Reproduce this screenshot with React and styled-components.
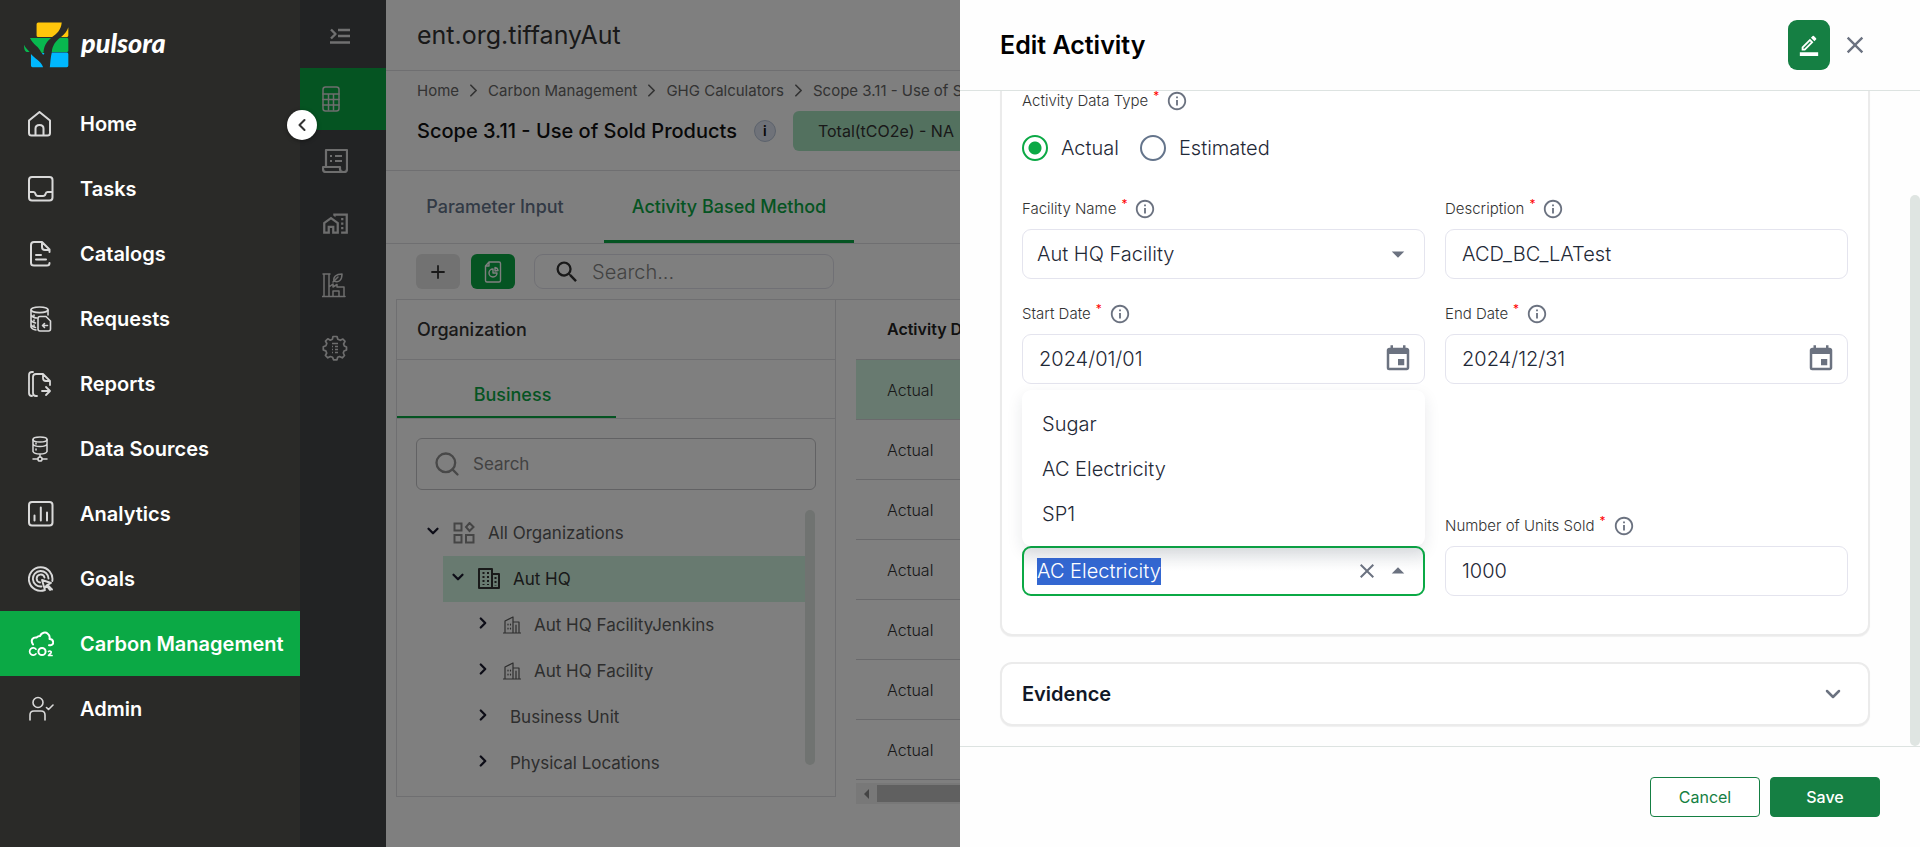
import React, { useEffect, useRef, useState } from "react";
import styled, { createGlobalStyle, css } from "styled-components";
import {
  MdArrowDropDown,
  MdArrowDropUp,
  MdClose,
  MdEvent,
  MdInfoOutline,
  MdOutlineHomeWork,
  MdSearch,
  MdOutlineBorderColor,
} from "react-icons/md";
import { ChevronDown, ChevronLeft, ChevronRight, Search } from "lucide-react";

const GlobalStyle = createGlobalStyle`
  *, *::before, *::after { box-sizing: border-box; }
  body {
    margin: 0;
    background: #fff;
    color: #111827;
    font-family: Inter, "Liberation Sans", sans-serif;
    overflow: hidden;
  }
  button, input, select { font: inherit; color: inherit; }
  button { cursor: pointer; }
  ul { list-style: none; margin: 0; padding: 0; }
  h1, h2, h3 { margin: 0; }
  svg { display: block; flex: none; }
`;

/* ---------- shell ---------- */

const Shell = styled.div`
  display: grid;
  grid-template-columns: 300px 86px minmax(0, 1fr);
  height: 100vh;
  overflow: hidden;
`;

const Sidebar = styled.aside`
  display: flex;
  flex-direction: column;
  background: #2a2a28;
  color: #fff;
`;

const Brand = styled.a`
  display: flex;
  align-items: center;
  gap: 12px;
  height: 91px;
  padding: 0 0 2px 24px;
  color: #fff;
  text-decoration: none;
  font: italic 900 27px/32px Lato, sans-serif;

  span { padding-bottom: 4px; }
`;

const NavLink = styled.a`
  display: flex;
  align-items: center;
  gap: 26px;
  height: 65px;
  padding-left: 28px;
  background: ${(p) => (p.$active ? "#0ba945" : "transparent")};
  color: #fff;
  font-size: 20px;
  font-weight: 600;
  text-decoration: none;
  white-space: nowrap;

  svg {
    width: 26px;
    height: 26px;
    color: ${(p) => (p.$active ? "#fff" : "#d9d9d9")};
  }
`;

const Rail = styled.nav`
  position: relative;
  background: #444649;
  color: #fff;
`;

const RailTop = styled.button`
  display: flex;
  align-items: center;
  width: 100%;
  height: 68px;
  padding: 4px 0 0 30px;
  border: 0;
  background: none;
  color: #e0e0e0;
`;

const RailList = styled.ul`
  display: flex;
  flex-direction: column;
  height: 311px;

  li { flex: 1; display: flex; }
`;

const RailLink = styled.a`
  flex: 1;
  display: flex;
  align-items: center;
  padding-left: 22px;
  color: #dcdcdc;
  background: ${(p) => (p.$active ? "#0ba945" : "transparent")};
`;

const Collapse = styled.button`
  position: fixed;
  z-index: 3;
  top: 110px;
  left: 287px;
  display: grid;
  place-items: center;
  width: 30px;
  height: 30px;
  padding: 0;
  border: 0;
  border-radius: 50%;
  background: #fff;
  color: #333;
  box-shadow: 0 1px 4px rgba(0, 0, 0, 0.4);
`;

const Backdrop = styled.div`
  position: fixed;
  z-index: 2;
  inset: 0 0 0 300px;
  background: rgba(0, 0, 0, 0.5);
`;

/* ---------- main page ---------- */

const Main = styled.main`
  min-width: 0;
  background: #fff;
`;

const OrgHeader = styled.header`
  display: flex;
  align-items: center;
  height: 71px;
  padding-left: 31px;
  border-bottom: 1px solid #dedee2;
  color: #333;
  font-size: 25px;
  line-height: 30px;
`;

const PageHead = styled.section`
  height: 100px;
  padding: 9px 0 0 31px;
  border-bottom: 1px solid #dedee2;
`;

const Crumbs = styled.nav`
  display: flex;
  align-items: center;
  gap: 4px;
  color: #666;
  font-size: 15px;
  line-height: 20px;
  white-space: nowrap;

  a { color: inherit; text-decoration: none; }
`;

const TitleRow = styled.div`
  display: flex;
  align-items: center;
  gap: 17px;
  margin-top: 10px;
`;

const PageTitle = styled.h1`
  font-size: 20px;
  font-weight: 500;
  line-height: 24px;
  color: #111;
  white-space: nowrap;
`;

const InfoDot = styled.button`
  width: 22px;
  height: 22px;
  padding: 0;
  border: 1px solid #b8c4d8;
  border-radius: 50%;
  background: #dfe5f2;
  color: #111;
  font-size: 14px;
  font-weight: 600;
  line-height: 20px;
`;

const TotalPill = styled.div`
  display: flex;
  align-items: center;
  height: 40px;
  padding: 0 25px;
  border-radius: 6px;
  background: #a7e2bf;
  color: #333;
  font-size: 16px;
  white-space: nowrap;
`;

const Tabs = styled.div`
  display: flex;
  height: 73px;
  border-bottom: 1px solid #dedee2;
`;

const Tab = styled.button`
  width: ${(p) => p.$width};
  padding: ${(p) => p.$pad || "2px 0 0"};
  border: 0;
  border-bottom: ${(p) => p.$bar || "3px"} solid ${(p) => (p.$active ? "#0ba945" : "transparent")};
  background: none;
  color: ${(p) => (p.$active ? "#0ba945" : "#64748b")};
  font-size: 18px;
  font-weight: 500;
  white-space: nowrap;
`;

const Toolbar = styled.div`
  display: flex;
  align-items: center;
  height: 55px;
  padding-left: 30px;
`;

const ToolButton = styled.button`
  display: grid;
  place-items: center;
  width: 44px;
  height: 35px;
  margin-right: 11px;
  padding: 0;
  border: 0;
  border-radius: 6px;
  background: ${(p) => (p.$primary ? "#0ba945" : "#e4e4e4")};
  color: ${(p) => (p.$primary ? "#fff" : "#333")};
`;

const SearchBox = styled.label`
  display: flex;
  align-items: center;
  gap: ${(p) => (p.$large ? "12px" : "11px")};
  width: ${(p) => (p.$large ? "auto" : "300px")};
  height: ${(p) => (p.$large ? "52px" : "35px")};
  margin: ${(p) => (p.$large ? "19px 19px 0" : "0 0 0 8px")};
  padding: 0 ${(p) => (p.$large ? "16px" : "18px")};
  border: 1px solid ${(p) => (p.$large ? "#c4c4c8" : "#e0e0ea")};
  border-radius: ${(p) => (p.$large ? "6px" : "9px")};
  color: ${(p) => (p.$large ? "#909090" : "#333")};

  input {
    flex: 1;
    min-width: 0;
    padding: 0;
    border: 0;
    outline: 0;
    background: none;
    font-size: ${(p) => (p.$large ? "17px" : "20px")};
    font-weight: ${(p) => (p.$large ? 400 : 300)};
  }
  input::placeholder { color: #858585; opacity: 1; }
`;

const Split = styled.div`
  display: flex;
  gap: 20px;
  margin-left: 10px;
  border-top: 1px solid #dedee2;
`;

const OrgPanel = styled.section`
  width: 440px;
  height: 497px;
  border: 1px solid #dedee2;
  border-top: 0;
`;

const PanelHead = styled.h2`
  height: 60px;
  padding-left: 20px;
  border-bottom: 1px solid #dedee2;
  color: #333;
  font-size: 18px;
  font-weight: 500;
  line-height: 60px;
`;

const PanelTabs = styled.div`
  display: flex;
  height: 59px;
  border-bottom: 1px solid #dedee2;
`;

const TreeScroll = styled.div`
  display: flex;
  margin: 20px 20px 0 27px;
  height: 277px;
`;

const Tree = styled.ul`
  flex: 1;
  min-width: 0;
`;

const TreeRow = styled.li`
  display: flex;
  align-items: center;
  gap: ${(p) => p.$gap || "13px"};
  height: 46px;
  margin-left: ${(p) => p.$indent || "0"};
  padding-left: ${(p) => p.$pad || "0"};
  background: ${(p) => (p.$selected ? "#d0f5e0" : "transparent")};
  color: ${(p) => (p.$selected ? "#333" : "#5c5c5c")};
  font-size: 17px;
  line-height: 24px;
  white-space: nowrap;

  button {
    display: grid;
    place-items: center;
    width: 16px;
    height: 24px;
    padding: 0 0 4px;
    border: 0;
    background: none;
    color: #1a1a2e;
  }
`;

const ScrollThumb = styled.div`
  width: 10px;
  height: ${(p) => p.$height};
  border-radius: 5px;
  background: #e0e6e2;
`;

const TableWrap = styled.div`
  flex: 1;
  min-width: 0;
`;

const DataTable = styled.table`
  width: 100%;
  border-collapse: separate;
  border-spacing: 0;

  th, td {
    height: 60px;
    padding: 0 0 0 31px;
    border-bottom: 1px solid #d4d4d8;
    text-align: left;
    font-size: 16px;
    font-weight: 300;
    color: #333;
  }
  th {
    padding-bottom: 1px;
    font-weight: 600;
    color: #222;
  }
`;

const DataRow = styled.tr`
  background: ${(p) => (p.$selected ? "#d0f5e0" : "transparent")};
`;

const HScroll = styled.div`
  display: flex;
  align-items: center;
  gap: 8px;
  height: 21px;
  margin-top: 3px;
  padding-left: 8px;
  background: #f1f1f1;
  color: #888;

  div { flex: 1; height: 17px; background: #c1c1c1; }
`;

/* ---------- drawer ---------- */

const Drawer = styled.section`
  position: fixed;
  z-index: 4;
  inset: 0 0 0 50%;
  display: flex;
  flex-direction: column;
  background: #fefefe;
`;

const DrawerHead = styled.header`
  display: flex;
  align-items: center;
  height: 91px;
  padding: 0 51px 0 40px;
  border-bottom: 1px solid #dde3e1;

  h2 {
    flex: 1;
    font-size: 25px;
    font-weight: 600;
    line-height: 30px;
    color: #000;
  }
`;

const EditButton = styled.button`
  display: grid;
  place-items: center;
  width: 42px;
  height: 50px;
  margin-right: 11px;
  padding: 0;
  border: 0;
  border-radius: 9px;
  background: #157f43;
  color: #fff;
`;

const IconButton = styled.button`
  display: grid;
  place-items: center;
  padding: 0;
  border: 0;
  background: none;
  color: #6b7280;
`;

const DrawerBody = styled.div`
  flex: 1;
  min-height: 0;
  display: flex;
  justify-content: space-between;
  padding-left: 40px;
  overflow: hidden;
`;

const Sections = styled.form`
  flex: 1;
  margin-right: 40px;
`;

const cardFrame = css`
  border: 2px solid #ebebeb;
  background: #fff;
  box-shadow: 0 1px 1px rgba(0, 0, 0, 0.06);
`;

const Card = styled.div`
  ${cardFrame}
  padding: 0 20px 38px;
  border-top: 0;
  border-radius: 0 0 12px 12px;
`;

const EvidenceCard = styled.button`
  ${cardFrame}
  display: flex;
  align-items: center;
  justify-content: space-between;
  width: 100%;
  height: 64px;
  margin-top: 26px;
  padding: 0 20px;
  border-radius: 12px;
  color: #111827;
  font-size: 20px;
  font-weight: 600;

  svg { margin-right: 3px; color: #6b7280; }
`;

const FieldGrid = styled.div`
  display: grid;
  grid-template-columns: 1fr 1fr;
  align-items: end;
  gap: 25px 20px;
  margin-top: ${(p) => p.$top};
`;

const FieldBox = styled.div`
  display: flex;
  flex-direction: column;
  gap: 10px;
  min-width: 0;
`;

const LabelRow = styled.div`
  display: flex;
  align-items: center;
  height: 20px;
  color: #333;
  font-size: 15px;
  font-weight: 300;
  line-height: 20px;

  label, span { white-space: nowrap; }
  sup {
    align-self: flex-start;
    margin: 0 7px 0 5px;
    color: #f00;
    font-size: 12px;
    font-weight: 400;
    line-height: 10px;
  }
  svg { color: #6b7280; }
`;

const Control = styled.div`
  position: relative;
  display: flex;
  align-items: center;
  height: 50px;
  border: ${(p) => (p.$focus ? "2px solid #0ba945" : "1px solid #e4e4ee")};
  border-radius: 9px;
  background: ${(p) => (p.$focus ? "linear-gradient(#e9ebed, #fff 50%)" : "#fff")};
  color: #1f2937;

  input, select {
    flex: 1;
    min-width: 0;
    width: 100%;
    height: 27px;
    padding: 0 0 0 ${(p) => (p.$focus ? "13px" : p.$select ? "14px" : "16px")};
    border: 0;
    outline: 0;
    appearance: none;
    background: none;
    font-size: 20px;
    font-weight: 300;
    line-height: 27px;
  }
  input::selection { background: #3367d1; color: #fff; }
`;

const ControlIcons = styled.div`
  display: flex;
  align-items: center;
  gap: 4px;
  margin-right: ${(p) => (p.$focus ? "10px" : "11px")};
  color: #6b7280;
  pointer-events: none;

  button { pointer-events: auto; }
`;

const Options = styled.ul`
  position: absolute;
  z-index: 1;
  right: -2px;
  bottom: 48px;
  left: -2px;
  padding: 12px 0 9px;
  border-radius: 9px;
  background: #fff;
  box-shadow: 0 6px 16px rgba(30, 41, 59, 0.1);
  font-size: 20px;
  font-weight: 300;

  li {
    height: 45px;
    padding-left: 20px;
    line-height: 45px;
  }
`;

const RadioGroup = styled.div`
  display: flex;
  gap: 21px;
  margin-top: 24px;

  label {
    display: flex;
    align-items: center;
    gap: 13px;
    height: 26px;
    color: #1f2937;
    font-size: 20px;
    font-weight: 300;
  }
  input {
    appearance: none;
    width: 26px;
    height: 26px;
    margin: 0;
    border: 2px solid #64748b;
    border-radius: 50%;
    background: #fff;
  }
  input:checked {
    border-color: #0ba945;
    background: radial-gradient(#0ba945 6px, #fff 7px);
  }
`;

const BodyScroll = styled.div`
  width: 10px;
  padding-top: 104px;

  div { width: 10px; height: 100%; border-radius: 5px; background: #dfe5e2; }
`;

const DrawerFoot = styled.footer`
  display: flex;
  justify-content: flex-end;
  gap: 10px;
  padding: 30px 40px;
  border-top: 1px solid #dde3e1;
`;

const FootButton = styled.button`
  width: 110px;
  height: 40px;
  border: 1px solid #157f43;
  border-radius: 4px;
  background: ${(p) => (p.$primary ? "#157f43" : "#fff")};
  color: ${(p) => (p.$primary ? "#fff" : "#157f43")};
  font-size: 16px;
  font-weight: ${(p) => (p.$primary ? 500 : 400)};
`;

/* ---------- drawings ---------- */

const Glyph = ({ children, size = 26, box = 26, width = 2, ...rest }) => (
  <svg
    width={size}
    height={size}
    viewBox={`0 0 ${box} ${box}`}
    fill="none"
    stroke="currentColor"
    strokeWidth={width}
    strokeLinecap="round"
    strokeLinejoin="round"
    aria-hidden="true"
    {...rest}
  >
    {children}
  </svg>
);

const Logo = () => (
  <svg width="45" height="46" viewBox="72 66 136 138" aria-hidden="true">
    <path fill="#ffc60b" d="M115 67H186C184 90 171 101 157 111H115Q110 111 110 106V72Q110 67 115 67ZM206 81V106Q206 111 201 111H184C195 101 202 93 206 81Z" />
    <path fill="#08b84f" d="M90 114H154C139 126 132 139 131 158Q127 161 124 158C117 139 101 136 90 114ZM181 113H202Q206 113 206 118V152Q206 156 201 156H156C158 135 168 124 181 113ZM72 134C77 144 83 148 89 156H80Q72 154 72 134Z" />
    <path fill="#00b8ff" d="M93 162C106 178 122 181 130 202H98Q93 202 93 197ZM156 158H202Q206 158 206 163V197Q206 202 201 202H150C152 188 152 174 156 158ZM126 159H134L130 165Z" />
  </svg>
);

const HomeIcon = () => (
  <Glyph>
    <path d="M1 9.500 11.500 1 22 9.500V22Q22 24.500 19.500 24.500H3.500Q1 24.500 1 22Z" />
    <path d="M7.500 24V17.500Q7.500 14 11.500 14T15.500 17.500V24" />
  </Glyph>
);
const TasksIcon = () => (
  <Glyph>
    <rect x="1" y="1" width="23.500" height="23.500" rx="3" />
    <path d="M1 16H5.500Q7 16 7.500 18 8 20 10 20H15Q17 20 17.500 18 18 16 19.500 16H24" />
  </Glyph>
);
const CatalogsIcon = () => (
  <Glyph>
    <path d="M21.500 22Q21.500 24.500 19 24.500H6Q3 24.500 3 22V4Q3 1 6 1H14L21.500 8.500V11M14 1V6Q14 9 17 9H21.500" />
    <path d="M8 14H13M8 18.500H18" />
  </Glyph>
);
const RequestsIcon = () => (
  <Glyph width={1.600}>
    <ellipse cx="11.500" cy="3.800" rx="8.500" ry="2.800" />
    <path d="M3 4V21Q4 23.500 8 24M20 4V9M3 9Q5 12 9 12M3 14Q4 16.500 7.500 17M3 18.500Q4 21 7.500 21.500M6 9V10M6 14V15M6 19V20" />
    <path d="M12 10.500H18L22.500 15V23Q22.500 25 20.500 25H12Q10 25 10 23V12.500Q10 10.500 12 10.500ZM19.500 19.500H15M16.500 17.500 14.500 19.500 16.500 21.500" />
  </Glyph>
);
const ReportsIcon = () => (
  <Glyph width={1.800}>
    <path d="M5 1H4Q1 1 1 4V22Q1 25 4 25M9 25H8Q5 25 5 22V6Q5 3 8 3H15L22 10V14M15 3V7Q15 10 18 10H22M14 20H21.500M18 16 22 20 18 24" />
  </Glyph>
);
const SourcesIcon = () => (
  <Glyph width={1.500}>
    <ellipse cx="12" cy="3.500" rx="7" ry="2.500" />
    <path d="M5 3.500V15.500Q6 18 12 18T19 15.500V3.500M5 8Q6 10.500 12 10.500T19 8M12 18V21M5 23H10M14 23H19M8 7V8M8 13V14" />
    <circle cx="12" cy="23" r="2.100" />
  </Glyph>
);
const AnalyticsIcon = () => (
  <Glyph>
    <rect x="1" y="1" width="23.500" height="23.500" rx="3" />
    <path d="M6.500 14.500V19.500M12.800 6.500V19.500M19 11.500V19.500" />
  </Glyph>
);
const GoalsIcon = () => (
  <Glyph width={1.900}>
    <path d="M17 24A11.800 11.800 0 1 1 24.300 15M13.500 20.500A7.800 7.800 0 1 1 20.500 12.500M12 16.500A4 4 0 1 1 16.500 11.500" />
    <path d="M14 14 23 17 19.500 18.800 24 23.500M14 14 16.500 22.500 18.500 19.500 22 24" />
  </Glyph>
);
const CarbonIcon = () => (
  <Glyph>
    <path d="M5 13.500C2 9 5 6 8.500 6.500 9.500 5.500 10.500 5 12 5 13.500 1.500 17.500 .8 19.500 2.500 21.500 4 22 6 21.500 8 26 8 26.500 14 22.500 14.200H21" />
    <circle cx="14" cy="20.500" r="3.600" />
    <path d="M8 18.200A3.600 3.600 0 1 0 8 22.800M20.500 20.500C21.500 19.500 24 20.200 23 21.800L20.500 24.500H24" strokeWidth="1.700" />
  </Glyph>
);
const AdminIcon = () => (
  <Glyph width={1.600}>
    <circle cx="10" cy="6.500" r="5" />
    <path d="M2 24V19Q2 15 6 15H13Q17 15 17 19V24M18.500 11.500 20.500 13.500 25 9" />
  </Glyph>
);

const MenuIcon = () => (
  <Glyph size={20} box={20} width={2.400} strokeLinecap="butt">
    <path d="M1 3.500 5.500 8 1 12.500M8 4H20M8 10H20M0 16.500H20" />
  </Glyph>
);
const CalculatorIcon = () => (
  <Glyph width={1.500}>
    <rect x="1" y="1" width="16" height="24" rx="2.500" />
    <path d="M1 8H17M1 13.500H17M1 19H17M6.500 8V24M11.500 8V24" />
  </Glyph>
);
const LedgerIcon = () => (
  <Glyph width={2.200} strokeLinecap="butt">
    <path d="M4 18V2H25V21Q25 24 22 24H4Q1 24 1 21V19H18V21Q18 24 21.500 24M8 8H10M13 8H20M8 13H10M13 13H20" />
  </Glyph>
);
const PlantIcon = () => (
  <Glyph width={1.500}>
    <path d="M1 1H8M2 1V23M7 1V23M0 23.500H23M7 14 11 11V14L15 11.500V14H22V23M11 23V18H17V23M11 9 16 4" />
    <path d="M12 8C11 4 14 1 20 1 20 7 17 10 12 8Z" />
  </Glyph>
);
const GearIcon = () => (
  <Glyph width={1.700}>
    <path d="M11 1.500H15L15.800 4.300 18.300 5.300 20.900 4 23 6.400 21.600 9 22.300 11 24.500 12V15L22 16 21.300 18 22.500 20.500 20.300 22.800 17.500 21.500 15.700 22.300 15 24.800H11.500L10.600 22.300 8.300 21.500 5.800 22.800 3.400 20.500 4.700 18 3.800 15.900 1.300 15V11.700L3.900 10.700 4.800 8.500 3.500 6 5.800 3.800 8.300 5.200 10.400 4.300Z" />
    <path d="M10 8.500H16M10 11.500H11M13 11.500H16M10 14.500H11M13 14.500H16M10 17.500H11M13 17.500H16" strokeWidth="1.500" strokeLinecap="butt" />
  </Glyph>
);
const SheetIcon = () => (
  <Glyph size={22} box={22} width={1.400}>
    <path d="M7 1H17Q18.500 1 18.500 2.500V19.500Q18.500 21 17 21H5Q3.500 21 3.500 19.500V5ZM7 1V5H3.500" />
    <path d="M11 8A4 4 0 1 0 15 12H11ZM13 6.500A3.500 3.500 0 0 1 16 9.500L13 10Z" />
  </Glyph>
);
const CompanyIcon = () => (
  <Glyph size={22} box={22} strokeLinecap="butt">
    <path d="M1 1H14V20H1ZM14 6H21V20H14" />
    <path d="M5.500 4V17M10 4V17M17.500 9V17.500" strokeDasharray="2 2" />
  </Glyph>
);
const GroupIcon = () => (
  <Glyph size={22} box={22} strokeLinejoin="miter" stroke="#8a8a8a">
    <path d="M1.500 1.500H8.500V8.500H1.500ZM1.500 13H8.500V20.500H1.500ZM13 13H20.500V20.500H13ZM16.500 1 20.500 5 16.500 9 13 5Z" />
  </Glyph>
);
const FacilityIcon = () => (
  <Glyph size={18} box={18} width={1.200}>
    <path d="M0 17H18M2 17V5L10 1V17M10 6H16V17M5 8V9M5 12V13M7.500 8V9M7.500 12V13M13 9V17" />
  </Glyph>
);

/* ---------- data ---------- */

const NAV = [
  ["Home", HomeIcon],
  ["Tasks", TasksIcon],
  ["Catalogs", CatalogsIcon],
  ["Requests", RequestsIcon],
  ["Reports", ReportsIcon],
  ["Data Sources", SourcesIcon],
  ["Analytics", AnalyticsIcon],
  ["Goals", GoalsIcon],
  ["Carbon Management", CarbonIcon],
  ["Admin", AdminIcon],
];

const RAIL = [
  ["Calculators", <CalculatorIcon />],
  ["Ledger", <LedgerIcon />],
  ["Facilities", <MdOutlineHomeWork size={27} />],
  ["Plants", <PlantIcon />],
  ["Settings", <GearIcon />],
];

const CRUMBS = ["Home", "Carbon Management", "GHG Calculators", "Scope 3.11 - Use of Sold Products"];

/* ---------- pieces ---------- */

const FieldLabel = ({ id, children }) => (
  <LabelRow>
    {id ? <label htmlFor={id}>{children}</label> : <span>{children}</span>}
    <sup>*</sup>
    <MdInfoOutline size={22} />
  </LabelRow>
);

function TextField({ id, label, value, date }) {
  const [text, setText] = useState(value);
  return (
    <FieldBox>
      <FieldLabel id={id}>{label}</FieldLabel>
      <Control>
        <input id={id} value={text} onChange={(e) => setText(e.target.value)} />
        {date && (
          <ControlIcons>
            <MdEvent size={30} />
          </ControlIcons>
        )}
      </Control>
    </FieldBox>
  );
}

function ProductCombo() {
  const ref = useRef(null);
  const [text, setText] = useState("AC Electricity");
  useEffect(() => {
    ref.current.focus();
    ref.current.select();
  }, []);
  return (
    <Control $focus>
      <Options role="listbox" id="products">
        {["Sugar", "AC Electricity", "SP1"].map((name) => (
          <li key={name} role="option" aria-selected={name === text} onClick={() => setText(name)}>
            {name}
          </li>
        ))}
      </Options>
      <input
        ref={ref}
        role="combobox"
        aria-label="Sold product"
        aria-expanded="true"
        aria-controls="products"
        value={text}
        onChange={(e) => setText(e.target.value)}
      />
      <ControlIcons $focus>
        <IconButton type="button" aria-label="Clear" onClick={() => setText("")}>
          <MdClose size={24} />
        </IconButton>
        <MdArrowDropUp size={30} />
      </ControlIcons>
    </Control>
  );
}

const TreeToggle = ({ open }) => (
  <button aria-label={open ? "Collapse" : "Expand"}>
    {open ? <ChevronDown size={18} strokeWidth={3} /> : <ChevronRight size={18} strokeWidth={3} />}
  </button>
);

export default function App() {
  return (
    <>
      <GlobalStyle />
      <Shell>
        <Sidebar>
          <Brand href="#">
            <Logo />
            <span>pulsora</span>
          </Brand>
          <nav>
            {NAV.map(([name, Icon]) => (
              <NavLink key={name} href="#" $active={name === "Carbon Management"}>
                <Icon />
                {name}
              </NavLink>
            ))}
          </nav>
        </Sidebar>

        <Rail>
          <RailTop aria-label="Expand menu">
            <MenuIcon />
          </RailTop>
          <RailList>
            {RAIL.map(([name, icon], i) => (
              <li key={name}>
                <RailLink href="#" aria-label={name} $active={i === 0}>
                  {icon}
                </RailLink>
              </li>
            ))}
          </RailList>
        </Rail>

        <Main>
          <OrgHeader>ent.org.tiffanyAut</OrgHeader>
          <PageHead>
            <Crumbs>
              {CRUMBS.map((name, i) => (
                <React.Fragment key={name}>
                  {i > 0 && <ChevronRight size={21} />}
                  <a href="#">{name}</a>
                </React.Fragment>
              ))}
            </Crumbs>
            <TitleRow>
              <PageTitle>Scope 3.11 - Use of Sold Products</PageTitle>
              <InfoDot aria-label="About this scope">i</InfoDot>
              <TotalPill>Total(tCO2e) - NA</TotalPill>
            </TitleRow>
          </PageHead>
          <Tabs>
            <Tab $width="218px">Parameter Input</Tab>
            <Tab $width="250px" $active>Activity Based Method</Tab>
          </Tabs>
          <Toolbar>
            <ToolButton aria-label="Add">
              <Glyph size={14} box={14} width={1.800}>
                <path d="M7 1V13M1 7H13" />
              </Glyph>
            </ToolButton>
            <ToolButton $primary aria-label="Report">
              <SheetIcon />
            </ToolButton>
            <SearchBox>
              <MdSearch size={28} />
              <input placeholder="Search..." aria-label="Search activities" />
            </SearchBox>
          </Toolbar>
          <Split>
            <OrgPanel>
              <PanelHead>Organization</PanelHead>
              <PanelTabs>
                <Tab $width="219px" $pad="12px 0 0 12px" $bar="2px" $active>Business</Tab>
              </PanelTabs>
              <SearchBox $large>
                <Search size={28} />
                <input placeholder="Search" aria-label="Search organizations" />
              </SearchBox>
              <TreeScroll>
                <Tree>
                  <TreeRow>
                    <TreeToggle open />
                    <GroupIcon />
                    All Organizations
                  </TreeRow>
                  <TreeRow $selected $indent="19px" $pad="6px">
                    <TreeToggle open />
                    <CompanyIcon />
                    Aut HQ
                  </TreeRow>
                  {["Aut HQ FacilityJenkins", "Aut HQ Facility"].map((name) => (
                    <TreeRow key={name} $indent="50px">
                      <TreeToggle />
                      <FacilityIcon />
                      {name}
                    </TreeRow>
                  ))}
                  {["Business Unit", "Physical Locations"].map((name) => (
                    <TreeRow key={name} $indent="50px" $gap="20px">
                      <TreeToggle />
                      {name}
                    </TreeRow>
                  ))}
                </Tree>
                <ScrollThumb $height="255px" />
              </TreeScroll>
            </OrgPanel>
            <TableWrap>
              <DataTable>
                <thead>
                  <tr>
                    <th>Activity Data Type</th>
                  </tr>
                </thead>
                <tbody>
                  {Array.from({ length: 7 }, (_, i) => (
                    <DataRow key={i} $selected={i === 0}>
                      <td>Actual</td>
                    </DataRow>
                  ))}
                </tbody>
              </DataTable>
              <HScroll>
                <svg width="5" height="10" viewBox="0 0 5 10" aria-hidden="true">
                  <path d="M5 0V10L0 5Z" fill="currentColor" />
                </svg>
                <div />
              </HScroll>
            </TableWrap>
          </Split>
        </Main>
      </Shell>

      <Backdrop />
      <Collapse aria-label="Collapse sidebar">
        <ChevronLeft size={20} strokeWidth={2.500} />
      </Collapse>

      <Drawer role="dialog" aria-label="Edit Activity">
        <DrawerHead>
          <h2>Edit Activity</h2>
          <EditButton aria-label="Edit">
            <MdOutlineBorderColor size={22} />
          </EditButton>
          <IconButton aria-label="Close">
            <MdClose size={28} />
          </IconButton>
        </DrawerHead>
        <DrawerBody>
          <Sections>
            <Card>
              <FieldLabel>Activity Data Type</FieldLabel>
              <RadioGroup role="radiogroup" aria-label="Activity Data Type">
                <label>
                  <input type="radio" name="type" defaultChecked />
                  Actual
                </label>
                <label>
                  <input type="radio" name="type" />
                  Estimated
                </label>
              </RadioGroup>
              <FieldGrid $top="38px">
                <FieldBox>
                  <FieldLabel id="facility">Facility Name</FieldLabel>
                  <Control $select>
                    <select id="facility">
                      <option>Aut HQ Facility</option>
                    </select>
                    <ControlIcons>
                      <MdArrowDropDown size={30} />
                    </ControlIcons>
                  </Control>
                </FieldBox>
                <TextField id="description" label="Description" value="ACD_BC_LATest" />
                <TextField id="start" label="Start Date" value="2024/01/01" date />
                <TextField id="end" label="End Date" value="2024/12/31" date />
              </FieldGrid>
              <FieldGrid $top="132px">
                <ProductCombo />
                <TextField id="units" label="Number of Units Sold" value="1000" />
              </FieldGrid>
            </Card>
            <EvidenceCard type="button">
              Evidence
              <ChevronDown size={24} strokeWidth={2.500} />
            </EvidenceCard>
          </Sections>
          <BodyScroll>
            <div />
          </BodyScroll>
        </DrawerBody>
        <DrawerFoot>
          <FootButton>Cancel</FootButton>
          <FootButton $primary>Save</FootButton>
        </DrawerFoot>
      </Drawer>
    </>
  );
}
